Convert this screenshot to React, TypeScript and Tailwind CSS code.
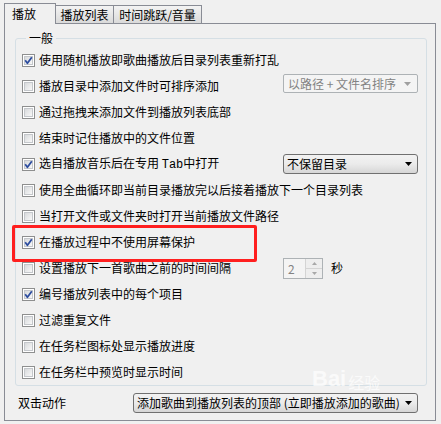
import React from 'react';

const FONT = "font-[family-name:'Noto_Sans_CJK_SC','Microsoft_YaHei',sans-serif]";

const Check = ({ checked }: { checked?: boolean }) => (
  <span className="flex h-[13px] w-[13px] shrink-0 items-center justify-center border border-[#8e8f8f] bg-white">
    <span className="flex h-[9px] w-[9px] items-center justify-center border border-[#c4c7cb] bg-gradient-to-br from-[#d8dadc] to-[#f8f8f8]">
      {checked && (
        <svg width="9" height="9" viewBox="0 0 9 9" className="-m-px">
          <path d="M1.2 4.3 L3.4 7.2 L7.8 1.2" fill="none" stroke="#2d4d9f" strokeWidth="1.8" strokeLinejoin="round" />
        </svg>
      )}
    </span>
  </span>
);

const Arrow = ({ color }: { color: string }) => (
  <svg width="7" height="4" viewBox="0 0 7 4" className="shrink-0">
    <path d="M0 0 L7 0 L3.5 4 Z" fill={color} />
  </svg>
);

const DisabledSelect = () => (
  <div className="-mt-[5px] flex h-[19px] w-[135px] items-center rounded-[2px] border border-[#adb2b5] bg-[#f4f4f4] pl-[4px] pr-[6px] text-[#838383]">
    <span className="flex-1 whitespace-nowrap">以路径 + 文件名排序</span>
    <Arrow color="#a0a0a0" />
  </div>
);

const Select = ({ text, width }: { text: string; width: string }) => (
  <div className={`flex h-[20px] items-center rounded-[3px] border border-[#707070] bg-gradient-to-b from-[#f2f2f2] via-[#ebebeb] to-[#d6d6d6] pl-[3px] pr-[5px] text-black ${width}`}>
    <span className="flex-1 whitespace-nowrap">{text}</span>
    <Arrow color="#000" />
  </div>
);

const Spin = () => (
  <div className="flex items-center gap-[8px]">
    <div className="flex h-[21px] w-[40px] border border-[#adb2b5] bg-[#f4f4f4]">
      <span className="flex-1 pl-[4px] leading-[19px] text-[#838383]">2</span>
      <div className="flex w-[17px] flex-col border-l border-[#d4d4d4]">
        <span className="flex flex-1 items-center justify-center border-b border-[#d4d4d4] bg-[#eeeeee]">
          <svg width="5" height="3" viewBox="0 0 5 3"><path d="M0 3 L5 3 L2.5 0 Z" fill="#a8a8a8" /></svg>
        </span>
        <span className="flex flex-1 items-center justify-center bg-[#eeeeee]">
          <svg width="5" height="3" viewBox="0 0 5 3"><path d="M0 0 L5 0 L2.5 3 Z" fill="#a8a8a8" /></svg>
        </span>
      </div>
    </div>
    <span>秒</span>
  </div>
);

interface Row {
  label: React.ReactNode;
  checked?: boolean;
  extra?: React.ReactNode;
}

const rows: Row[] = [
  { label: '使用随机播放即歌曲播放后目录列表重新打乱', checked: true },
  { label: '播放目录中添加文件时可排序添加', extra: <DisabledSelect /> },
  { label: '通过拖拽来添加文件到播放列表底部' },
  { label: '结束时记住播放中的文件位置' },
  {
    label: (
      <>
        选自播放音乐后在专用 <span className="font-['Liberation_Mono',monospace] text-[12px]">Tab</span>中打开
      </>
    ),
    checked: true,
    extra: <Select text="不保留目录" width="w-[135px]" />,
  },
  { label: '使用全曲循环即当前目录播放完以后接着播放下一个目录列表' },
  { label: '当打开文件或文件夹时打开当前播放文件路径' },
  { label: '在播放过程中不使用屏幕保护', checked: true },
  { label: '设置播放下一首歌曲之前的时间间隔', extra: <Spin /> },
  { label: '编号播放列表中的每个项目', checked: true },
  { label: '过滤重复文件' },
  { label: '在任务栏图标处显示播放进度' },
  { label: '在任务栏中预览时显示时间' },
];

export default function App() {
  return (
    <div className={`relative h-[424px] w-[441px] overflow-hidden bg-[#f0f0f0] pt-[3px] pl-[4px] text-[12px] leading-[14px] text-black ${FONT}`}>
      {/* 标签页 */}
      <div className="flex h-[20px] items-end">
        <div className="relative z-10 -mb-px h-[21px] w-[52px] border border-b-0 border-[#898c95] bg-[#f0f0f0] pl-[7px] pt-[3px]">
          播放
        </div>
        <div className="h-[18px] w-[58px] border border-b-0 border-l-0 border-[#898c95] bg-gradient-to-b from-[#f3f3f3] to-[#dadada] pt-[2px] text-center">
          播放列表
        </div>
        <div className="h-[18px] w-[88px] border border-b-0 border-l-0 border-[#898c95] bg-gradient-to-b from-[#f3f3f3] to-[#dadada] pt-[2px] text-center">
          时间跳跃/音量
        </div>
      </div>

      {/* 面板 */}
      <div className="flex h-[398px] w-[432px] flex-col border border-[#898c95] bg-[#f0f0f0]">
        <fieldset className="mt-[7px] ml-[10px] mr-[8px] rounded-[3px] border border-[#d5dfe5] pl-[6px] pr-[8px] pt-[2px]">
          <legend className="ml-[4px] px-[3px] leading-[14px]">一般</legend>
          {rows.map((row, i) => (
            <div key={i} className="flex h-[26px] items-center">
              <Check checked={row.checked} />
              <span className="ml-[4px] flex-1 whitespace-nowrap">{row.label}</span>
              {row.extra && <div className="flex w-[135px] shrink-0">{row.extra}</div>}
            </div>
          ))}
        </fieldset>

        <div className="mt-[7px] flex items-center pl-[13px]">
          <span className="w-[115px]">双击动作</span>
          <Select text="添加歌曲到播放列表的顶部 (立即播放添加的歌曲)" width="w-[285px]" />
        </div>
      </div>

      {/* 标注框 */}
      <div className="absolute left-[12px] top-[225px] h-[37px] w-[245px] rounded-[2px] border-[3px] border-[#ff1f1f]" />

      {/* 水印 */}
      <div className="absolute left-[312px] top-[368px] flex items-end gap-[2px] text-white opacity-70">
        <span className="font-['Liberation_Sans',sans-serif] text-[22px] font-bold leading-none">Bai</span>
        <span className="text-[16px] leading-none">经验</span>
      </div>
    </div>
  );
}
